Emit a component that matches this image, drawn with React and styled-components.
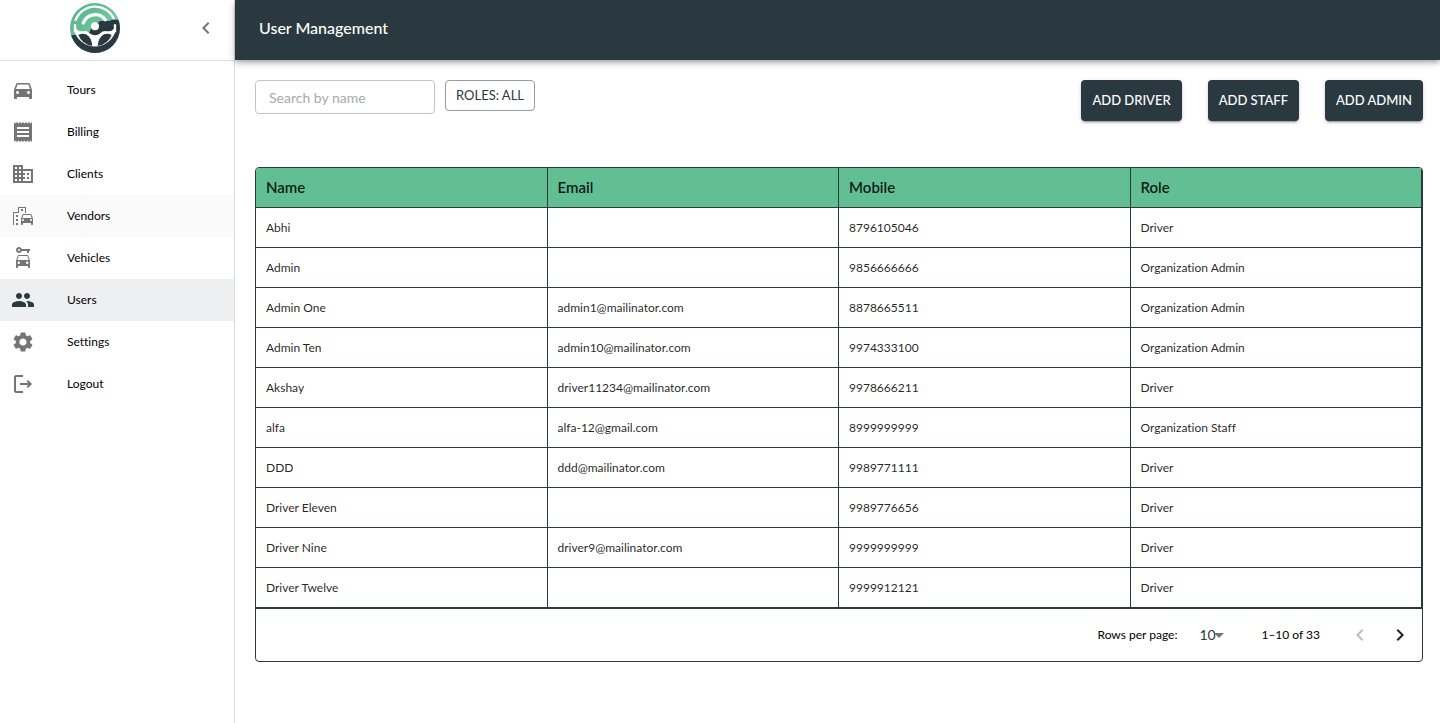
import React, { useState } from "react";
import styled, { createGlobalStyle } from "styled-components";
import {
  MdDirectionsCar,
  MdReceipt,
  MdDomain,
  MdEmojiTransportation,
  MdCarRental,
  MdPeople,
  MdSettings,
  MdChevronLeft,
  MdChevronRight,
  MdArrowDropDown,
} from "react-icons/md";

const ink = "#2a3940";
const green = "#62be93";

const GlobalStyle = createGlobalStyle`
  *, *::before, *::after { box-sizing: border-box; }
  body {
    margin: 0;
    background: #fff;
    color: #000;
    font-family: Lato, "Liberation Sans", sans-serif;
    font-variant-ligatures: none;
  }
  button, input, select { font-family: inherit; }
`;

const Shell = styled.div`
  display: flex;
  min-height: 100vh;
`;

const Sidebar = styled.aside`
  flex: 0 0 235px;
  border-right: 1px solid #dedede;
`;

const Brand = styled.div`
  display: flex;
  align-items: center;
  justify-content: space-between;
  height: 61px;
  padding: 0 16px 4px 70px;
  border-bottom: 1px solid #dedede;
`;

const IconButton = styled.button`
  display: flex;
  align-items: center;
  justify-content: center;
  width: ${(p) => p.$size}px;
  height: ${(p) => p.$size}px;
  padding: 0;
  border: 0;
  background: none;
  color: ${(p) => p.$color};
  font-size: 24px;
  cursor: pointer;
  &:disabled { cursor: default; }
`;

const NavList = styled.nav`
  display: flex;
  flex-direction: column;
  padding-top: 8px;
`;

const NavLink = styled.a`
  display: flex;
  align-items: center;
  gap: 32px;
  height: 42px;
  padding-left: 11px;
  background: ${(p) => p.$background || "transparent"};
  color: #000;
  font-size: 12px;
  line-height: 20px;
  text-decoration: none;
  svg {
    width: 24px;
    height: 24px;
    color: ${(p) => (p.$active ? ink : "#757575")};
  }
`;

const Main = styled.div`
  flex: 1;
  min-width: 0;
`;

const TopBar = styled.header`
  display: flex;
  align-items: center;
  height: 60px;
  padding: 0 24px 4px;
  background: ${ink};
  box-shadow: 0 2px 4px -1px rgba(0, 0, 0, 0.2), 0 4px 5px rgba(0, 0, 0, 0.14),
    0 1px 10px rgba(0, 0, 0, 0.12);
`;

const Title = styled.h1`
  margin: 0;
  color: #fff;
  font-size: 16px;
  line-height: 24px;
  font-weight: 500;
`;

const Content = styled.main`
  padding: 20px 17px 20px 20px;
`;

const Toolbar = styled.div`
  display: flex;
  align-items: flex-start;
  gap: 10px;
  margin-bottom: 46px;
`;

const SearchInput = styled.input`
  width: 180px;
  height: 34px;
  padding: 0 13px;
  border: 1px solid #c4c4c4;
  border-radius: 4px;
  font-size: 14px;
  outline: 0;
  &::placeholder { color: #a9a9a9; opacity: 1; }
`;

const RolesButton = styled.button`
  height: 31px;
  padding: 0 10px 2px;
  border: 1px solid #959b9f;
  border-radius: 4px;
  background: #fff;
  color: ${ink};
  font-size: 13px;
  cursor: pointer;
`;

const Actions = styled.div`
  display: flex;
  gap: 26px;
  margin-left: auto;
`;

const AddButton = styled.button`
  height: 41px;
  padding: 0 11px 2px;
  border: 0;
  border-radius: 4px;
  background: ${ink};
  color: #fff;
  font-size: 13px;
  font-weight: 500;
  cursor: pointer;
  box-shadow: 0 3px 1px -2px rgba(0, 0, 0, 0.2), 0 2px 2px rgba(0, 0, 0, 0.14),
    0 1px 5px rgba(0, 0, 0, 0.12);
`;

const Card = styled.section`
  border: 1px solid ${ink};
  border-radius: 4px;
  overflow: hidden;
`;

const Table = styled.table`
  width: 100%;
  table-layout: fixed;
  border-collapse: separate;
  border-spacing: 0;
`;

const HeadCell = styled.th`
  height: 40px;
  padding: 0 10px 2px;
  border-right: 1px solid ${ink};
  border-bottom: 1px solid ${ink};
  background: ${green};
  color: rgba(0, 0, 0, 0.87);
  font-size: 15px;
  font-weight: 600;
  text-align: left;
`;

const Cell = styled.td`
  height: 40px;
  padding: 0 10px;
  border-right: 1px solid ${ink};
  border-bottom: 1px solid ${ink};
  color: rgba(0, 0, 0, 0.87);
  font-size: 12px;
`;

const Pagination = styled.footer`
  display: flex;
  align-items: center;
  justify-content: flex-end;
  height: 53px;
  padding-right: 2px;
  border-top: 1px solid ${ink};
  font-size: 12px;
  line-height: 20px;
`;

const SelectBox = styled.span`
  position: relative;
  display: flex;
  align-items: center;
  margin: 0 34px 0 22px;
  svg {
    position: absolute;
    right: -4px;
    width: 24px;
    height: 24px;
    color: #757575;
    pointer-events: none;
  }
`;

const RowsSelect = styled.select`
  width: 28px;
  height: 24px;
  padding: 0 0 2px;
  border: 0;
  background: transparent;
  appearance: none;
  color: ${ink};
  font-size: 14px;
`;

const PageCount = styled.span`
  margin-right: 20px;
`;

function Logo() {
  return (
    <svg width="50" height="50" viewBox="0 0 150 150" role="img" aria-label="Steering wheel">
      <defs>
        <clipPath id="wheel"><circle cx="75" cy="75" r="75" /></clipPath>
        <linearGradient id="mint" x1="0" y1="0" x2="1" y2="1">
          <stop offset="0" stopColor="#56b088" />
          <stop offset="1" stopColor="#7fd6ae" />
        </linearGradient>
      </defs>
      <g clipPath="url(#wheel)">
        <rect width="150" height="150" fill="url(#mint)" />
        <path d="M0 96H54L64 76L75 68L90 54H118L126 50H150V150H0Z" fill={ink} />
        <path d="M12 78H20Q24 87 44 84Q54 84 58 90Q66 97 75 97Q84 97 92 90Q96 84 106 84Q126 87 130 78H138A64 64 0 0 1 12 78Z" fill="#fff" />
        <path d="M25 96Q36 90 48 94Q64 102 67 129Q36 124 25 96Z" fill={ink} />
        <path d="M125 96Q114 90 102 94Q86 102 83 129Q114 124 125 96Z" fill={ink} />
        <g fill="none" stroke="#fff">
          <path d="M16 54A62 62 0 0 1 132 48" strokeWidth="7" />
          <path d="M40 60A38 38 0 0 1 106 50" strokeWidth="10" strokeLinecap="round" />
          <path d="M15 64V88M135 64V88" strokeWidth="7" />
        </g>
        <circle cx="75" cy="70" r="12" fill="#fff" />
      </g>
    </svg>
  );
}

function LogoutIcon() {
  return (
    <svg viewBox="0 0 24 24" fill="currentColor" aria-hidden="true">
      <path d="M17 8l-1.41 1.41L17.17 11H9v2h8.17l-1.58 1.58L17 16l4-4-4-4zM5 5h7V3H5c-1.1 0-2 .9-2 2v14c0 1.1.9 2 2 2h7v-2H5V5z" />
    </svg>
  );
}

const navItems = [
  { label: "Tours", Icon: MdDirectionsCar },
  { label: "Billing", Icon: MdReceipt },
  { label: "Clients", Icon: MdDomain },
  { label: "Vendors", Icon: MdEmojiTransportation, background: "#fafafa" },
  { label: "Vehicles", Icon: MdCarRental },
  { label: "Users", Icon: MdPeople, active: true, background: "#eeeff0" },
  { label: "Settings", Icon: MdSettings },
  { label: "Logout", Icon: LogoutIcon },
];

const users = [
  ["Abhi", "", "8796105046", "Driver"],
  ["Admin", "", "9856666666", "Organization Admin"],
  ["Admin One", "admin1@mailinator.com", "8878665511", "Organization Admin"],
  ["Admin Ten", "admin10@mailinator.com", "9974333100", "Organization Admin"],
  ["Akshay", "driver11234@mailinator.com", "9978666211", "Driver"],
  ["alfa", "alfa-12@gmail.com", "8999999999", "Organization Staff"],
  ["DDD", "ddd@mailinator.com", "9989771111", "Driver"],
  ["Driver Eleven", "", "9989776656", "Driver"],
  ["Driver Nine", "driver9@mailinator.com", "9999999999", "Driver"],
  ["Driver Twelve", "", "9999912121", "Driver"],
];

export default function App() {
  const [search, setSearch] = useState("");
  const [rows, setRows] = useState("10");
  return (
    <Shell>
      <GlobalStyle />
      <Sidebar>
        <Brand>
          <Logo />
          <IconButton $size={24} $color="#757575" aria-label="Collapse menu">
            <MdChevronLeft />
          </IconButton>
        </Brand>
        <NavList>
          {navItems.map(({ label, Icon, active, background }) => (
            <NavLink key={label} href="#" $active={active} $background={background}>
              <Icon />
              {label}
            </NavLink>
          ))}
        </NavList>
      </Sidebar>
      <Main>
        <TopBar>
          <Title>User Management</Title>
        </TopBar>
        <Content>
          <Toolbar>
            <SearchInput
              aria-label="Search by name"
              placeholder="Search by name"
              value={search}
              onChange={(e) => setSearch(e.target.value)}
            />
            <RolesButton>ROLES: ALL</RolesButton>
            <Actions>
              <AddButton>ADD DRIVER</AddButton>
              <AddButton>ADD STAFF</AddButton>
              <AddButton>ADD ADMIN</AddButton>
            </Actions>
          </Toolbar>
          <Card>
            <Table>
              <thead>
                <tr>
                  {["Name", "Email", "Mobile", "Role"].map((h) => (
                    <HeadCell key={h} scope="col">{h}</HeadCell>
                  ))}
                </tr>
              </thead>
              <tbody>
                {users.map((user) => (
                  <tr key={user[0]}>
                    {user.map((value, i) => (
                      <Cell key={i}>{value}</Cell>
                    ))}
                  </tr>
                ))}
              </tbody>
            </Table>
            <Pagination>
              <label htmlFor="rows">Rows per page:</label>
              <SelectBox>
                <RowsSelect id="rows" value={rows} onChange={(e) => setRows(e.target.value)}>
                  <option>10</option>
                  <option>25</option>
                  <option>50</option>
                </RowsSelect>
                <MdArrowDropDown />
              </SelectBox>
              <PageCount>1–10 of 33</PageCount>
              <IconButton $size={40} $color="#bdbdbd" aria-label="Previous page" disabled>
                <MdChevronLeft />
              </IconButton>
              <IconButton $size={40} $color="#212121" aria-label="Next page">
                <MdChevronRight />
              </IconButton>
            </Pagination>
          </Card>
        </Content>
      </Main>
    </Shell>
  );
}
